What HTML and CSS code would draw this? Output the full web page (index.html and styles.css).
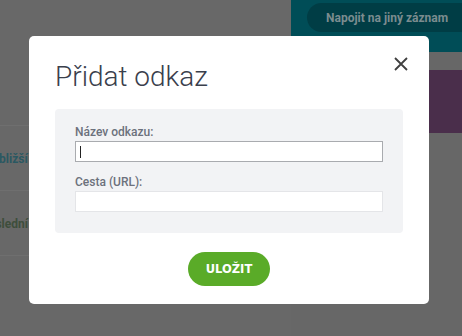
FILE: index.html
```html
<!DOCTYPE html>
<html lang="cs">
<head>
<meta charset="utf-8">
<title>Přidat odkaz</title>
<link rel="stylesheet" href="styles.css">
</head>
<body>
<div class="backdrop">
  <div class="main">
    <div class="main-top"></div>
    <div class="row"><span class="row-text teal">Nejbližší</span></div>
    <div class="row"><span class="row-text olive">Poslední</span></div>
    <div class="row last"></div>
  </div>
  <div class="side">
    <div class="side-bar">
      <span class="pill">Napojit na jiný záznam</span>
    </div>
    <div class="side-card"></div>
  </div>
</div>

<div class="modal">
  <button class="close" aria-label="Zavřít">
    <svg width="14" height="14" viewBox="0 0 14 14"><path d="M1 1L13 13M13 1L1 13" stroke="#3f3f3f" stroke-width="1.8" fill="none"/></svg>
  </button>
  <h1 class="title">Přidat odkaz</h1>
  <div class="form-box">
    <label class="label">Název odkazu:</label>
    <div class="input focused"><span class="caret"></span></div>
    <label class="label second">Cesta (URL):</label>
    <div class="input"></div>
  </div>
  <div class="actions">
    <button class="save">ULOŽIT</button>
  </div>
</div>
</body>
</html>
```

FILE: styles.css
```css
html, body {
  margin: 0;
  padding: 0;
}
body {
  width: 462px;
  height: 336px;
  overflow: hidden;
  background: #676767;
  font-family: Roboto, "Noto Sans", sans-serif;
  position: relative;
}
.backdrop {
  display: grid;
  grid-template-columns: 291px 1fr;
  height: 336px;
}
.main {
  display: flex;
  flex-direction: column;
  background: #686868;
}
.main-top {
  height: 125px;
  border-bottom: 1px solid #6f6f6f;
}
.row {
  height: 64px;
  border-bottom: 1px solid #6f6f6f;
  display: flex;
  align-items: center;
  overflow: hidden;
  white-space: nowrap;
}
.row.last {
  height: auto;
  flex: 1;
  border-bottom: none;
}
.row-text {
  font-weight: 700;
  font-size: 12px;
  margin-top: 2px;
}
.teal { color: #2a5862; margin-left: -19px; }
.olive { color: #3e4e3c; margin-left: -19px; }
.side {
  display: flex;
  flex-direction: column;
}
.side-bar {
  height: 52px;
  background: #004d57;
  padding: 3px 0 0 16px;
  box-sizing: border-box;
}
.pill {
  display: inline-flex;
  align-items: center;
  height: 29px;
  padding: 0 30px 0 19px;
  border-radius: 15px;
  background: #003d45;
  color: #7b8c8f;
  font-weight: 700;
  font-size: 12px;
  white-space: nowrap;
}
.side-card {
  margin-top: 18px;
  height: 63px;
  background: #4a2e4b;
}
.modal {
  position: absolute;
  left: 29px;
  top: 36px;
  width: 400px;
  height: 268px;
  background: #fff;
  border-radius: 5px;
  box-sizing: border-box;
  padding: 24px 26px 0;
  display: flex;
  flex-direction: column;
}
.close {
  position: absolute;
  right: 21px;
  top: 21px;
  width: 14px;
  height: 14px;
  padding: 0;
  border: none;
  background: none;
  display: block;
}
.close svg { display: block; }
.title {
  margin: 0;
  font-weight: 300;
  font-size: 28px;
  line-height: 34px;
  color: #3a404c;
}
.form-box {
  margin-top: 15px;
  background: #f2f3f5;
  border-radius: 4px;
  padding: 15px 20px 21px;
  display: flex;
  flex-direction: column;
}
.label {
  display: block;
  font-size: 12px;
  font-weight: 500;
  line-height: 16px;
  color: #6c717c;
  margin-bottom: 1px;
}
.label.second {
  margin-top: 12px;
}
.input {
  height: 21px;
  box-sizing: border-box;
  background: #fff;
  border: 1px solid #e4e5e8;
  display: flex;
  align-items: center;
  padding-left: 4px;
}
.input.focused {
  border-color: #a9abaf;
}
.caret {
  width: 1px;
  height: 12px;
  background: #222;
}
.actions {
  display: flex;
  justify-content: center;
  margin-top: 19px;
}
.save {
  width: 82px;
  height: 34px;
  border: none;
  border-radius: 17px;
  background: #5aab28;
  color: #fff;
  font-family: "DejaVu Sans", Verdana, sans-serif;
  font-weight: 700;
  font-size: 11.5px;
  padding: 0;
}
```
